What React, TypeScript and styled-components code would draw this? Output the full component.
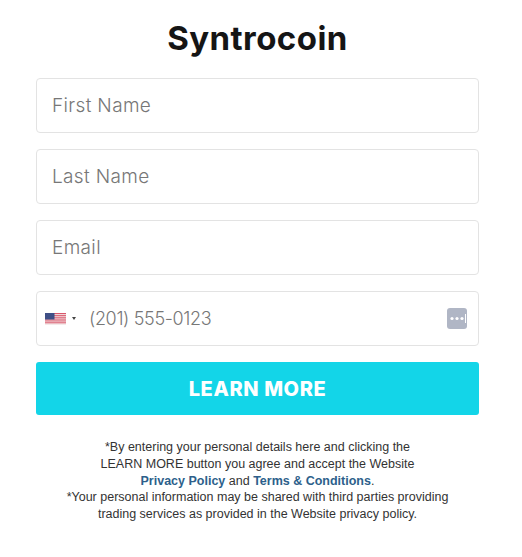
import React from 'react'
import styled, { createGlobalStyle } from 'styled-components'

const GlobalStyle = createGlobalStyle`
  html, body {
    margin: 0;
    padding: 0;
    background: #fff;
  }
`

const Page = styled.div`
  width: 522px;
  height: 557px;
  box-sizing: border-box;
  padding: 0 43px 0 36px;
  overflow: hidden;
  font-family: Inter, 'Liberation Sans', sans-serif;
`

const Title = styled.h1`
  margin: 0;
  height: 78px;
  box-sizing: border-box;
  padding-top: 18px;
  text-align: center;
  font-size: 33px;
  line-height: 40px;
  font-weight: 700;
  letter-spacing: 0.45px;
  color: #151515;
`

const Form = styled.form`
  display: flex;
  flex-direction: column;
  gap: 16px;
`

const Field = styled.div`
  height: 55px;
  box-sizing: border-box;
  display: flex;
  align-items: center;
  padding: 0 11px 0 15px;
  border: 1px solid #e3e3e3;
  border-radius: 4px;
  background: #fff;
`

const TextInput = styled.input`
  flex: 1;
  min-width: 0;
  border: 0;
  outline: 0;
  padding: 0;
  background: transparent;
  font-family: Inter, 'Liberation Sans', sans-serif;
  font-size: 19px;
  font-weight: 300;
  letter-spacing: 0.35px;
  color: #333;

  &::placeholder {
    color: #777;
    opacity: 1;
  }
`

const PhoneInput = styled(TextInput)`
  font-size: 18px;
  letter-spacing: -0.35px;
`

const FlagPicker = styled.div`
  display: flex;
  align-items: center;
  gap: 6px;
  margin: 0 13px 0 -7px;
`

const Caret = styled.span`
  width: 0;
  height: 0;
  border-left: 2.5px solid transparent;
  border-right: 2.5px solid transparent;
  border-top: 3.5px solid #444;
`

const Submit = styled.button`
  height: 53px;
  border: 0;
  border-radius: 3px;
  background: #13d5e8;
  color: #fff;
  font-family: Inter, 'Liberation Sans', sans-serif;
  font-size: 20px;
  font-weight: 800;
  letter-spacing: 0.6px;
  text-transform: uppercase;
`

const Disclaimer = styled.p`
  margin: 24px 0 0;
  text-align: center;
  font-family: 'Liberation Sans', Arial, sans-serif;
  font-size: 12.5px;
  line-height: 16.75px;
  color: #333;
`

const PolicyLink = styled.a`
  color: #2d5f8b;
  font-weight: 700;
  text-decoration: none;
`

const UsFlag = () => (
  <svg width="21" height="12" viewBox="0 0 21 12" aria-hidden="true">
    <rect width="21" height="12" fill="#f4eaea" />
    {[0, 2, 4, 6, 8, 10].map((y) => (
      <rect key={y} y={y * 0.93} width="21" height="1" fill="#d9566a" />
    ))}
    <rect width="9.5" height="6.5" fill="#3f4f86" />
  </svg>
)

const AutofillIcon = () => (
  <svg width="20" height="21" viewBox="0 0 20 21" aria-hidden="true">
    <rect width="20" height="21" rx="3" fill="#b0b6c5" />
    <circle cx="5" cy="10.5" r="1.6" fill="#fff" />
    <circle cx="10" cy="10.5" r="1.6" fill="#fff" />
    <circle cx="15" cy="10.5" r="1.6" fill="#fff" />
    <rect x="18" y="6" width="1" height="9" fill="#fff" />
  </svg>
)

const App: React.FC = () => (
  <Page>
    <GlobalStyle />
    <Title>Syntrocoin</Title>
    <Form>
      <Field>
        <TextInput placeholder="First Name" />
      </Field>
      <Field>
        <TextInput placeholder="Last Name" />
      </Field>
      <Field>
        <TextInput placeholder="Email" />
      </Field>
      <Field>
        <FlagPicker>
          <UsFlag />
          <Caret />
        </FlagPicker>
        <PhoneInput placeholder="(201) 555-0123" />
        <AutofillIcon />
      </Field>
      <Submit type="button">Learn more</Submit>
    </Form>
    <Disclaimer>
      *By entering your personal details here and clicking the
      <br />
      LEARN MORE button you agree and accept the Website
      <br />
      <PolicyLink href="#">Privacy Policy</PolicyLink> and <PolicyLink href="#">Terms &amp; Conditions</PolicyLink>.
      <br />
      *Your personal information may be shared with third parties providing
      <br />
      trading services as provided in the Website privacy policy.
    </Disclaimer>
  </Page>
)

export default App
